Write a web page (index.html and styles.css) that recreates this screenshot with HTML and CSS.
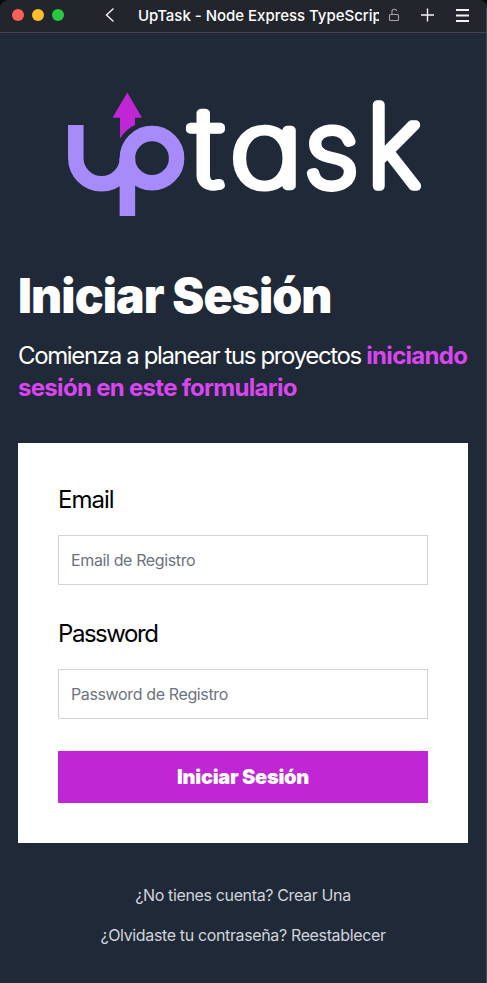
FILE: index.html
```html
<!DOCTYPE html>
<html lang="es">
<head>
<meta charset="utf-8">
<title>UpTask - Node Express TypeScript</title>
<link rel="stylesheet" href="styles.css">
</head>
<body>
<div class="window">
  <header class="titlebar">
    <div class="lights"><i class="light red"></i><i class="light yellow"></i><i class="light green"></i></div>
    <svg class="back" width="10" height="16" viewBox="0 0 10 16"><path d="M8.500 1.500 1.500 8l7 6.500"/></svg>
    <span class="tab-title">UpTask - Node Express TypeScrip</span>
    <svg class="lock" width="12" height="14" viewBox="0 0 12 14"><rect x="1.500" y="6.500" width="9" height="6" rx="1"/><path d="M4 6.500V4a2.300 2.300 0 0 1 4.600-.8"/></svg>
    <svg class="plus" width="14" height="14" viewBox="0 0 14 14"><path d="M7.500 .5v13M1 7h13"/></svg>
    <svg class="menu" width="14" height="14" viewBox="0 0 14 14"><path d="M1 2h13M1 7.500h13M1 13h13"/></svg>
  </header>
  <main class="page">
    <svg class="logo" width="354" height="124" viewBox="67 92 354 124" role="img" aria-label="uptask">
      <path class="arrow" d="M127.300 92.500 142 117.700H135V125Q126 129 120 138.500V117.700H112.500Z"/>
      <path class="mark" d="M75.800 125V158A25.800 25.800 0 0 0 127.400 158"/>
      <circle class="mark" cx="152" cy="158.200" r="24.600"/>
      <path class="mark" d="M127.400 158V216"/>
      <g class="word"><text transform="translate(190.500 185.500) scale(1.3 1.06)">t</text><text transform="translate(230.200 185.500) scale(1.22 1)">a</text><text transform="translate(304.400 185.500) scale(1.07 1)">s</text><text transform="translate(366.900 185.500) scale(1.07 1.09)">k</text></g>
    </svg>
    <h1>Iniciar Sesión</h1>
    <p class="lead">Comienza a planear tus proyectos <strong>iniciando<br>sesión en este formulario</strong></p>
    <form class="card">
      <div class="field"><label for="email">Email</label><input id="email" type="email" placeholder="Email de Registro"></div>
      <div class="field"><label for="password">Password</label><input id="password" type="password" placeholder="Password de Registro"></div>
      <button type="button">Iniciar Sesión</button>
    </form>
    <nav class="links"><a class="signup">¿No tienes cuenta? Crear Una</a><a class="forgot">¿Olvidaste tu contraseña? Reestablecer</a></nav>
  </main>
</div>
</body>
</html>
```
FILE: styles.css
```css
* { box-sizing: border-box; }
body { margin: 0; background: #0c0d10; font-family: Inter, sans-serif; }
.window { height: 983px; background: #1f2937; border-right: 1px solid #414954; border-radius: 9px 9px 0 0; overflow: hidden; }
.titlebar { display: flex; align-items: center; height: 33px; padding: 0 17px 2px 12px; background: #22252c; border-bottom: 1px solid #44464c; color: #fff; }
.titlebar svg { flex: none; fill: none; stroke: #f3f3f4; stroke-width: 1.4; }
.lights { display: flex; gap: 8px; }
.light { width: 12px; height: 12px; border-radius: 50%; }
.red { background: #ff5f57; }
.yellow { background: #febc2e; }
.green { background: #28c840; }
.back { margin-left: 41px; }
.tab-title { width: 241px; margin-left: 23px; overflow: hidden; white-space: nowrap; font-size: 15px; line-height: 20px; font-weight: 500; letter-spacing: -.02px; position: relative; top: 1px; }
.titlebar .lock { margin-left: 9px; stroke: #a2a4a8; stroke-width: 1.1; }
.plus { margin-left: 20px; }
.titlebar .menu { margin-left: 21px; stroke-width: 1.8; }
.page { padding: 59px 18px 0; }
.logo { display: block; margin-left: 49px; overflow: visible; }
.arrow { fill: #c026d3; }
.mark { fill: none; stroke: #a78bfa; stroke-width: 15.500; }
.word { font-size: 102px; font-weight: 100; font-feature-settings: "cv11" 1; }
.word text { fill: #fff; stroke: #fff; stroke-width: 9.500; stroke-linejoin: round; vector-effect: non-scaling-stroke; }
h1 { margin: 56px 0 0; color: #fff; font-size: 48px; line-height: 48px; font-weight: 900; letter-spacing: -.9px; white-space: nowrap; }
.lead { margin: 20px 0 0; color: #fff; font-size: 24px; line-height: 32px; font-weight: 400; letter-spacing: -1.360px; white-space: nowrap; }
.lead strong { color: #d946ef; font-weight: 700; letter-spacing: -.7px; }
.card { height: 400px; margin-top: 39px; padding: 40px; background: #fff; display: flex; flex-direction: column; gap: 32px; }
.field { display: flex; flex-direction: column; gap: 20px; }
label { color: #000; font-size: 24px; line-height: 34px; height: 32px; font-weight: 400; letter-spacing: -1.450px; }
label[for="email"] { letter-spacing: -1px; }
input { width: 100%; height: 50px; padding: 12px; border: 1px solid #d1d5db; font: 400 16px/24px Inter, sans-serif; letter-spacing: -.37px; }
input::placeholder { color: #6b7280; opacity: 1; }
button { height: 52px; border: 0; background: #c026d3; color: #fff; font: 900 20px/28px Inter, sans-serif; letter-spacing: -.28px; }
.links { display: flex; flex-direction: column; gap: 16px; margin-top: 40px; text-align: center; color: #d1d5db; font-size: 16px; line-height: 24px; letter-spacing: -.36px; }
```
